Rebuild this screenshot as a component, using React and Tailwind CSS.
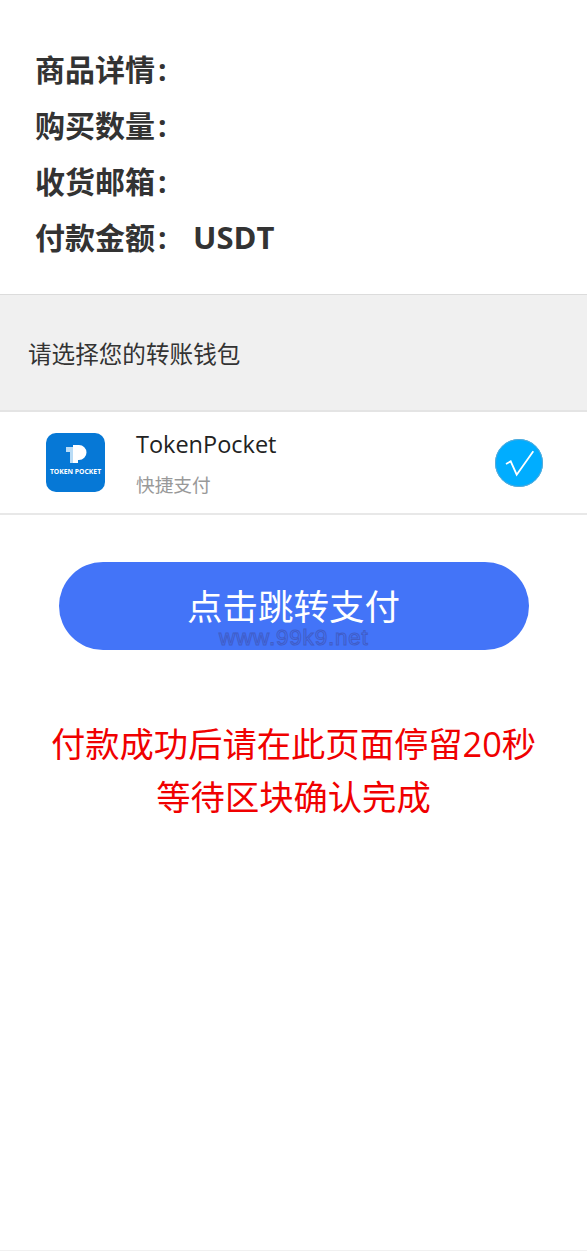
import React from 'react';

const font = { fontFamily: '"Open Sans", "Noto Sans CJK SC", sans-serif' };

const rows = ['商品详情', '购买数量', '收货邮箱'];

const TokenLogo = () => (
    <svg width="59" height="59" viewBox="0 0 59 59" className="block">
        <rect width="59" height="59" rx="10" fill="#0678d6" />
        <path d="M20 14h7v16h-3v-11h-4z" fill="#b9dcf6" />
        <path d="M27 12h6a7.500 7.500 0 0 1 0 15h-1v3h-5z" fill="#fff" />
        <text x="29.5" y="40.500" textAnchor="middle" fontSize="6.800" fontWeight="700" fill="#fff" fontFamily="Open Sans, sans-serif">TOKEN POCKET</text>
    </svg>
);

const CheckIcon = () => (
    <svg width="48" height="48" viewBox="0 0 48 48" className="block">
        <circle cx="24" cy="24" r="24" fill="#00adff" />
        <circle cx="24" cy="24" r="23.5" fill="none" stroke="#5aa9d6" strokeWidth="1" />
        <path d="M11 25l4.700-2.700 6 13.400L38.300 12.300" fill="none" stroke="#fff" strokeWidth="1.800" />
    </svg>
);

const App = () => {
    return (
        <div className="relative bg-white h-[1251px] w-full overflow-hidden border-b border-[#f0f0f0]" style={font}>
            <div className="pl-[35px] pt-[42px] h-[294px]">
                {rows.map((row) => (
                    <div key={row} className="h-14 leading-14 text-[30px] font-bold text-[#333]">
                        {row}<span className="ml-[3px]">:</span>
                    </div>
                ))}
                <div className="h-14 leading-14 text-[30px] font-bold text-[#333] flex">
                    <span className="w-[158px]">付款金额<span className="ml-[3px]">:</span></span>
                    <span className="text-[31px] -mt-px">USDT</span>
                </div>
            </div>

            <div className="h-[118px] bg-[#f0f0f0] border-t border-[#dcdcdc] border-b-2 border-b-[#e4e4e4] flex items-center px-7 pt-1 text-[23.600px] text-[#333]">
                请选择您的转账钱包
            </div>

            <div className="h-[103px] border-b-2 border-[#e8e8e8] flex items-center pl-[46px] pr-11">
                <TokenLogo />
                <div className="ml-[31px] flex-1">
                    <div className="text-[23.500px] leading-[34px] text-[#222]">TokenPocket</div>
                    <div className="text-[18.700px] leading-[26px] mt-[11px] text-[#999]">快捷支付</div>
                </div>
                <CheckIcon />
            </div>

            <div className="flex justify-center mt-[47px]">
                <button className="w-[470px] h-[88px] rounded-[44px] bg-[#4374f8] text-white text-[35.500px] leading-none pt-0.5">点击跳转支付</button>
            </div>

            <div className="mt-[68px] text-center text-[34.300px] leading-[52.500px] text-[#f00000]">
                <p>付款成功后请在此页面停留20秒</p>
                <p>等待区块确认完成</p>
            </div>

            <div className="absolute left-[219px] top-[626px] text-[22.500px] leading-6 tracking-[0.8px] text-[#4374f8]/60 [-webkit-text-stroke:1px_#3f4fa8]" style={{ fontFamily: '"Liberation Sans", sans-serif', opacity: 0.6 }}>
                www.99k9.net
            </div>
        </div>
    );
};

export default App;
